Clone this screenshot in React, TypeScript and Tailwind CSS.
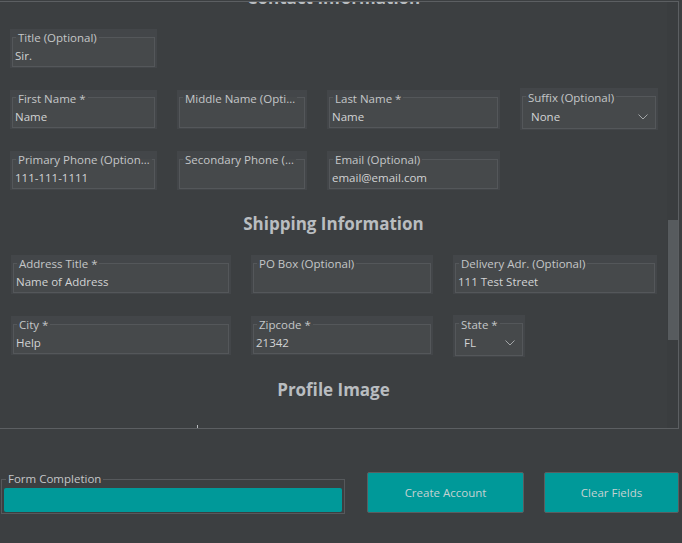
import React from "react";

type FieldProps = { label: string; value?: string; className: string };

function TextField({ label, value, className }: FieldProps) {
  return (
    <div className={`bg-[#434649] px-[2px] pb-[1px] ${className}`}>
      <fieldset className="min-w-0 border border-[#54575a] bg-[#46494b]">
        <legend className="ml-[3px] px-[2px] text-[11.5px] leading-[16px] text-[#c4c6c8] whitespace-nowrap">
          <span className="relative top-[1px]">{label}</span>
        </legend>
        <div className="h-[21px] pl-[2px] text-[11.5px] leading-[21px] text-[#d2d3d4]">{value}</div>
      </fieldset>
    </div>
  );
}

function ComboField({ label, value, className }: FieldProps) {
  return (
    <div className={`bg-[#434649] px-[2px] pb-[1px] ${className}`}>
      <fieldset className="min-w-0 border border-[#54575a] bg-[#46494b]">
        <legend className="ml-[3px] px-[2px] text-[11.5px] leading-[17px] text-[#c4c6c8] whitespace-nowrap">
          <span className="relative top-[1px]">{label}</span>
        </legend>
        <div className="flex h-[23px] items-center justify-between pl-[8px] pr-[7px] text-[11.5px] text-[#d2d3d4]">
          <span>{value}</span>
          <svg width="10" height="6" viewBox="0 0 10 6" fill="none">
            <path d="M0.5 0.5 L5 5 L9.5 0.5" stroke="#a3a6a8" strokeWidth="1" />
          </svg>
        </div>
      </fieldset>
    </div>
  );
}

function Heading({ children, className = "" }: { children: React.ReactNode; className?: string }) {
  return (
    <div className={`h-[24px] text-center text-[17px] font-bold leading-[24px] text-[#b9bdc0] ${className}`}>
      {children}
    </div>
  );
}

export default function App() {
  return (
    <div className="h-[543px] w-[682px] overflow-hidden bg-[#3c3f41] font-['Open_Sans','Noto_Sans',sans-serif]">
      {/* scroll area */}
      <div className="mt-[1px] flex h-[428px] w-[679px] border-y border-r border-[#5c5f62]">
        <div className="w-[667px] overflow-hidden">
          <div className="-mt-[16px]">
            <Heading>Contact Information</Heading>

            <div className="mt-[19px] flex pl-[10px]">
              <TextField label="Title (Optional)" value="Sir." className="w-[147px]" />
            </div>

            <div className="mt-[20px] flex h-[42px] items-center gap-[20px] pl-[10px]">
              <TextField label="First Name *" value="Name" className="w-[147px]" />
              <TextField label="Middle Name (Opti…" className="w-[130px]" />
              <TextField label="Last Name *" value="Name" className="w-[173px]" />
              <ComboField label="Suffix (Optional)" value="None" className="w-[138px]" />
            </div>

            <div className="mt-[21px] flex gap-[20px] pl-[10px]">
              <TextField label="Primary Phone (Option…" value="111-111-1111" className="w-[147px]" />
              <TextField label="Secondary Phone (…" className="w-[130px]" />
              <TextField label="Email (Optional)" value="email@email.com" className="w-[173px]" />
            </div>

            <Heading className="mt-[22px]">Shipping Information</Heading>

            <div className="mt-[19px] flex gap-[20px] pl-[11px]">
              <TextField label="Address Title *" value="Name of Address" className="w-[220px]" />
              <TextField label="PO Box (Optional)" className="w-[182px]" />
              <TextField label="Delivery Adr. (Optional)" value="111 Test Street" className="w-[204px]" />
            </div>

            <div className="mt-[20px] flex h-[43px] items-center gap-[20px] pl-[11px]">
              <TextField label="City *" value="Help" className="w-[220px]" />
              <TextField label="Zipcode *" value="21342" className="w-[182px]" />
              <ComboField label="State *" value="FL" className="w-[72px]" />
            </div>

            <Heading className="mt-[21px]">Profile Image</Heading>

            <div className="ml-[197px] mt-[23px] h-[4px] w-[1px] bg-[#b8bbbe]" />
          </div>
        </div>
        {/* scrollbar */}
        <div className="w-[11px] bg-[#3a3d3f] pl-[1px]">
          <div className="mt-[218px] h-[120px] w-[10px] bg-[#575b5e]" />
        </div>
      </div>

      {/* footer */}
      <div className="mt-[42px] flex items-start">
        <fieldset className="ml-[1px] w-[344px] min-w-0 border border-[#56595c]">
          <legend className="ml-[4px] px-[2px] text-[11.5px] leading-[16px] text-[#c4c6c8]">
            <span className="relative top-[0px]">Form Completion</span>
          </legend>
          <div className="px-[2px] pt-[1px] pb-[1px]">
            <div className="h-[24px] rounded-[2px] bg-[#009999]" />
          </div>
        </fieldset>
        <button className="ml-[22px] mt-[1px] h-[41px] w-[157px] rounded-[2px] border border-[#5a5e60] bg-[#009999] text-[11.5px] text-[#c5d2d2]">
          Create Account
        </button>
        <button className="ml-[20px] mt-[1px] h-[41px] w-[135px] rounded-[2px] border border-[#5a5e60] bg-[#009999] text-[11.5px] text-[#c5d2d2]">
          Clear Fields
        </button>
      </div>
    </div>
  );
}
